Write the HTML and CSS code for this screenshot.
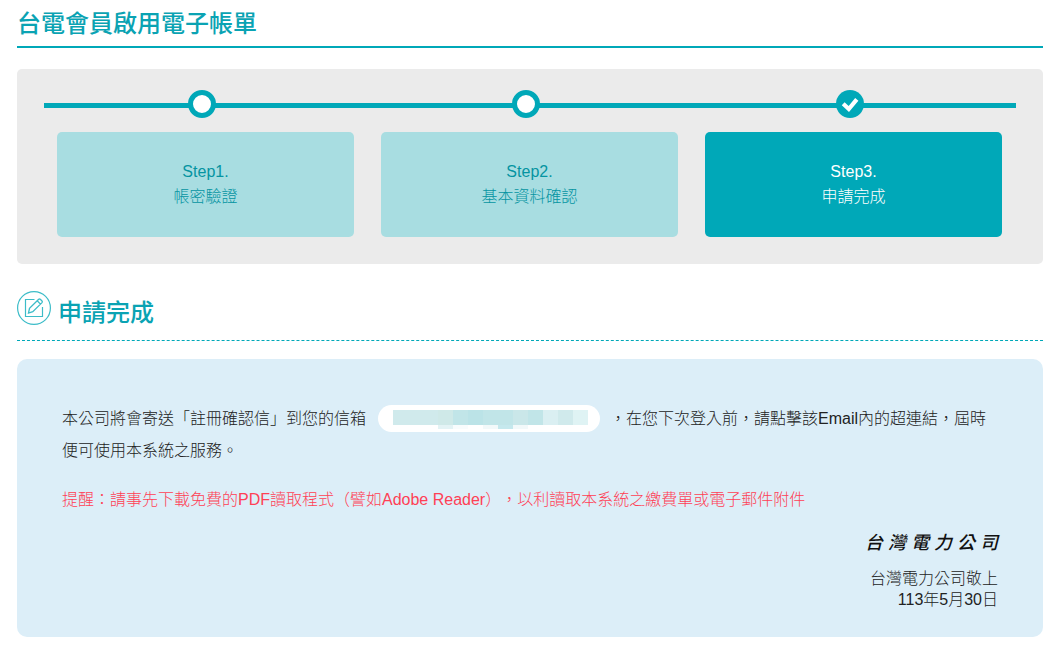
FILE: index.html
```html
<!DOCTYPE html>
<html lang="zh-Hant">
	<head>
		<meta charset="utf-8">
		<meta name="viewport" content="width=device-width, initial-scale=1">
		<title>台電會員啟用電子帳單</title>
		<link rel="stylesheet" href="styles.css">
	</head>
	<body>
		<main class="page">
			<h1 class="page-title">台電會員啟用電子帳單</h1>

			<div class="step-box">
				<ol class="steps">
					<li class="step">
						<span class="dot"></span>
						<div class="step-card">Step1.<br>帳密驗證</div>
					</li>
					<li class="step">
						<span class="dot"></span>
						<div class="step-card">Step2.<br>基本資料確認</div>
					</li>
					<li class="step current">
						<span class="dot">
							<svg width="28" height="28" viewBox="0 0 28 28" aria-hidden="true">
								<path d="M7.2 13.8l5.6 5.2 8-9.6" fill="none" stroke="#fff" stroke-width="4.2"/>
							</svg>
						</span>
						<div class="step-card">Step3.<br>申請完成</div>
					</li>
				</ol>
			</div>

			<h2 class="sub-title">
				<svg class="sub-icon" width="34" height="34" viewBox="0 0 34 34" fill="none" stroke="#3cbcc8" aria-hidden="true">
					<circle cx="17" cy="17" r="16.4" stroke-width="1.2"/>
					<path d="M17.5 8.5h-9v17h17V16" stroke-width="1.2"/>
					<path d="M11.5 22l1-4.6 9.2-9.1q.8-.7 1.6 0l1.7 1.7q.7.8 0 1.6l-9.2 9.1zM20.2 9.8l3.3 3.3" stroke-width="1.3"/>
				</svg>
				<span>申請完成</span>
			</h2>

			<section class="notice">
				<p class="message">本公司將會寄送「註冊確認信」到您的信箱<span class="mail">
					<svg width="195" height="19" viewBox="0 0 195 19" shape-rendering="crispEdges" aria-hidden="true">
						<path fill="#d0eaec" d="M0 0h60v15H0zM165 0h15v15h-15z"/>
						<path fill="#cfe9e8" d="M45 0h15v15H45z"/>
						<path fill="#c1e5e8" d="M60 0h15v15H60zM90 0h30v15H90zM135 0h15v15h-15z"/>
						<path fill="#bbe3e7" d="M75 0h15v15H75z"/>
						<path fill="#cae7e9" d="M120 0h15v15h-15z"/>
						<path fill="#daeff2" d="M150 0h15v15h-15z"/>
						<path fill="#dff3f4" d="M180 0h15v15h-15z"/>
						<path fill="#e3f3f5" d="M45 15h15v4H45z"/>
						<path fill="#f8fcfd" d="M60 15h15v4H60z"/>
						<path fill="#f2f9fa" d="M90 15h15v4H90zM120 15h15v4h-15z"/>
						<path fill="#c5e8ed" d="M105 15h15v4h-15z"/>
					</svg></span>，在您下次登入前，請點擊該Email內的超連結，屆時便可使用本系統之服務。</p>
				<p class="remind">提醒：請事先下載免費的PDF讀取程式（譬如Adobe Reader），以利讀取本系統之繳費單或電子郵件附件</p>
				<div class="sign">
					<div class="sign-name">
						<span>台</span><span>灣</span><span>電</span><span>力</span><span>公</span><span>司</span>
					</div>
					<p>台灣電力公司敬上</p>
					<p>113年5月30日</p>
				</div>
			</section>
		</main>
	</body>
</html>
```
FILE: styles.css
```css
*{
	box-sizing: border-box;
	margin: 0;
	padding: 0;
}
body{
	background: #fff;
	color: #222;
	font: 300 16px/32px "Liberation Sans", "Noto Sans CJK TC", sans-serif;
	text-spacing-trim: space-all;
}
.page{
	padding: 0 20px 15px 17px;
}

/* 標題 */
.page-title{
	padding: 6px 0 4px;
	border-bottom: 2px solid #00a8b8;
	color: #0aa3b3;
	font-size: 24px;
	font-weight: 500;
	line-height: 36px;
}
.sub-title{
	display: flex;
	align-items: flex-start;
	gap: 7px;
	padding: 27px 0 5px;
	border-bottom: 1px dashed #00a8b8;
	color: #0aa3b3;
	font-size: 24px;
	font-weight: 500;
	line-height: 44px;
}
.sub-icon{
	flex: none;
}

/* 步驟 */
.step-box{
	margin-top: 21px;
	padding: 21px 27px 27px;
	border-radius: 5px;
	background: #ebebeb;
}
.steps{
	position: relative;
	display: grid;
	grid-template-columns: repeat(3, 1fr);
	list-style: none;
}
.steps::before{
	content: "";
	position: absolute;
	top: 13px;
	left: 0;
	right: 0;
	height: 5px;
	background: #00a8b8;
}
.step{
	position: relative;
	display: flex;
	flex-direction: column;
	padding: 0 14px 0 13px;
}
.dot{
	width: 28px;
	height: 28px;
	margin: 0 calc(50% - 10px) 14px calc(50% - 18px);
	border: 5px solid #00a8b8;
	border-radius: 50%;
	background: #fff;
}
.step-card{
	padding: 27px 10px 28px;
	border-radius: 5px;
	background: #a8dde1;
	color: #0594a1;
	line-height: 25px;
	text-align: center;
}
.current .dot{
	border: 0;
	background: #00a8b8;
}
.current .dot svg{
	display: block;
}
.current .step-card{
	background: #00a8b8;
	color: #fff;
}

/* 內容 */
.notice{
	margin-top: 18px;
	padding: 44px 45px 27px;
	border-radius: 10px;
	background: #dceef8;
}
.mail{
	display: inline-flex;
	align-items: center;
	height: 27px;
	margin: 0 10px 2px 12px;
	padding: 2px 12px 0 15px;
	border-radius: 14px;
	background: #fff;
	vertical-align: middle;
}
.remind{
	margin-top: 17px;
	color: #ff4055;
}
.sign{
	display: flex;
	flex-direction: column;
	align-items: flex-end;
	margin-top: 14px;
	line-height: 21px;
}
.sign-name{
	display: flex;
	gap: 5px;
	margin-bottom: 12px;
	color: #111;
	font-size: 18px;
	font-style: italic;
	font-weight: 500;
	line-height: 26px;
}
```
